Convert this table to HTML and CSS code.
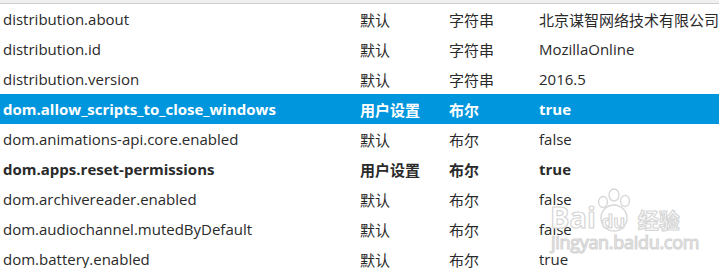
FILE: index.html
```html
<!DOCTYPE html>
<html>
<head>
<meta charset="utf-8">
<link rel="stylesheet" href="styles.css">
</head>
<body>
<div class="header"></div>
<div class="table">
  <div class="row"><span>distribution.about</span><span class="zh">默认</span><span class="zh">字符串</span><span class="zh">北京谋智网络技术有限公司</span></div>
  <div class="row"><span>distribution.id</span><span class="zh">默认</span><span class="zh">字符串</span><span>MozillaOnline</span></div>
  <div class="row"><span>distribution.version</span><span class="zh">默认</span><span class="zh">字符串</span><span>2016.5</span></div>
  <div class="row user selected"><span>dom.allow_scripts_to_close_windows</span><span class="zh">用户设置</span><span class="zh">布尔</span><span>true</span></div>
  <div class="row"><span>dom.animations-api.core.enabled</span><span class="zh">默认</span><span class="zh">布尔</span><span>false</span></div>
  <div class="row user"><span>dom.apps.reset-permissions</span><span class="zh">用户设置</span><span class="zh">布尔</span><span>true</span></div>
  <div class="row"><span>dom.archivereader.enabled</span><span class="zh">默认</span><span class="zh">布尔</span><span>false</span></div>
  <div class="row"><span>dom.audiochannel.mutedByDefault</span><span class="zh">默认</span><span class="zh">布尔</span><span>false</span></div>
  <div class="row"><span>dom.battery.enabled</span><span class="zh">默认</span><span class="zh">布尔</span><span>true</span></div>
</div>
<div class="watermark">
  <svg class="paw" width="40" height="44" viewBox="0 0 40 44">
    <g fill="#ffffff" stroke="#d8d8d8" stroke-width="1.4">
      <ellipse cx="20" cy="7" rx="5" ry="6"/>
      <ellipse cx="9" cy="14" rx="4.5" ry="5.5"/>
      <ellipse cx="31" cy="13" rx="4.5" ry="5.5"/>
      <circle cx="20" cy="30" r="13"/>
    </g>
  </svg>
  <div class="wm-line">
    <span class="wm-bai">Bai</span><span class="wm-du">du</span><span class="wm-jy">经验</span>
  </div>
  <div class="wm-url">jingyan.baidu.com</div>
</div>
</body>
</html>
```
FILE: styles.css
```css
html, body {
  margin: 0;
  padding: 0;
  background: #ffffff;
}
body {
  position: relative;
  width: 719px;
  height: 268px;
  overflow: hidden;
  font-family: "Open Sans", "Noto Sans CJK SC", sans-serif;
  font-size: 15px;
  color: #2a2a2a;
}
.header {
  height: 3px;
  background: #f0f0f0;
  border-bottom: 1px solid #cfcfcf;
}
.table {
  display: flex;
  flex-direction: column;
}
.row {
  display: grid;
  grid-template-columns: 357px 89px 90px 1fr;
  height: 30px;
  align-items: center;
  padding-left: 3px;
  white-space: nowrap;
}
.row span {
  overflow: hidden;
}
.row .zh {
  font-size: 15px;
}
.row.user {
  font-weight: 700;
}
.row.selected {
  background: #0096dd;
  color: #ffffff;
}
.watermark {
  position: absolute;
  left: 550px;
  top: 186px;
  width: 130px;
  height: 70px;
  color: #ffffff;
  -webkit-text-stroke: 1.2px #d6d6d6;
  font-family: "Open Sans", "Noto Sans CJK SC", sans-serif;
  font-weight: 700;
}
.paw {
  position: absolute;
  left: 44px;
  top: 2px;
}
.wm-line {
  position: absolute;
  left: 0;
  top: 16px;
  display: flex;
  align-items: baseline;
  line-height: 1;
}
.wm-bai {
  font-size: 29px;
}
.wm-du {
  position: relative;
  margin-left: 6px;
  font-size: 18px;
  width: 30px;
}
.wm-jy {
  font-family: "Noto Sans CJK SC", sans-serif;
  font-size: 21px;
  margin-left: 6px;
}
.wm-url {
  position: absolute;
  left: 1px;
  top: 47px;
  font-size: 18px;
  font-weight: 400;
  line-height: 1;
  letter-spacing: -0.3px;
}
```
